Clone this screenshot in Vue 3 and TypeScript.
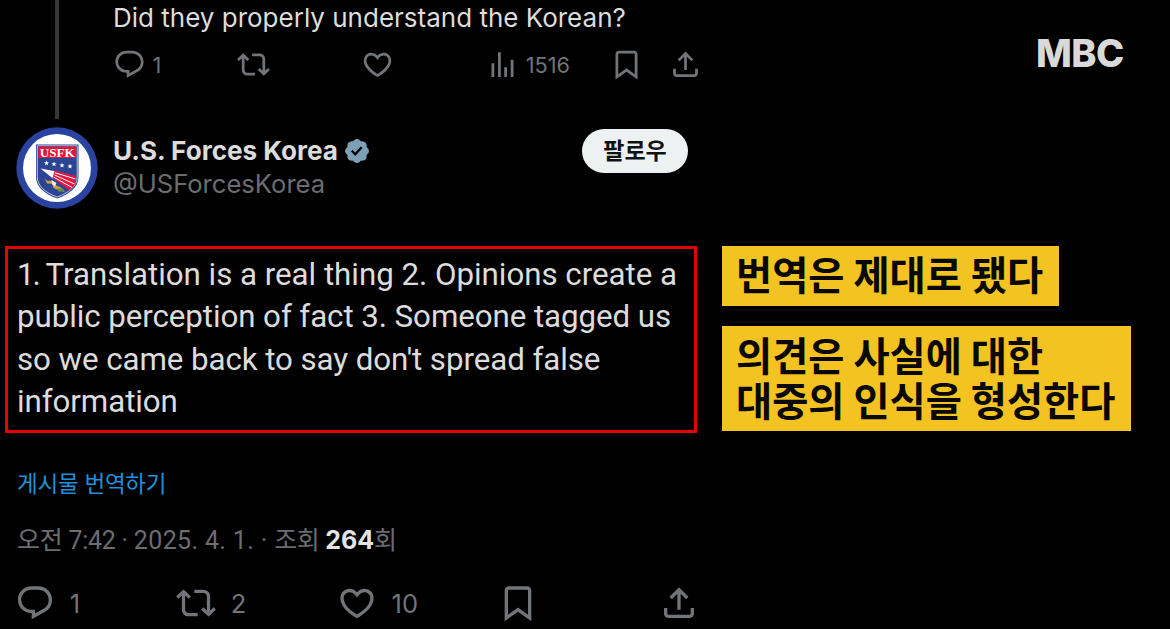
<script setup lang="ts">
interface Action {
  icon: keyof typeof icons
  label: string
  count?: string
}

const icons = {
  reply:
    'M1.751 10c0-4.42 3.584-8 8.005-8h4.366c4.49 0 8.129 3.64 8.129 8.13 0 2.96-1.607 5.68-4.196 7.11l-8.054 4.46v-3.69h-.067c-4.49.1-8.183-3.51-8.183-8.01zm8.005-6c-3.317 0-6.005 2.69-6.005 6 0 3.37 2.77 6.08 6.138 6.01l.351-.01h1.761v2.3l5.087-2.81c1.951-1.08 3.163-3.13 3.163-5.36 0-3.39-2.744-6.13-6.129-6.13H9.756z',
  repost:
    'M4.5 3.88l4.432 4.14-1.364 1.46L5.5 7.55V16c0 1.1.896 2 2 2H13v2H7.5c-2.209 0-4-1.79-4-4V7.55L1.432 9.48.068 8.02 4.5 3.88zM16.5 6H11V4h5.5c2.209 0 4 1.79 4 4v8.45l2.068-1.93 1.364 1.46-4.432 4.14-4.432-4.14 1.364-1.46 2.068 1.93V8c0-1.1-.896-2-2-2z',
  like:
    'M16.697 5.5c-1.222-.06-2.679.51-3.89 2.16l-.805 1.09-.806-1.09C9.984 6.01 8.526 5.44 7.304 5.5c-1.243.07-2.349.78-2.91 1.91-.552 1.12-.633 2.78.479 4.82 1.074 1.97 3.257 4.27 7.129 6.61 3.87-2.34 6.052-4.64 7.126-6.61 1.111-2.04 1.03-3.7.477-4.82-.561-1.13-1.666-1.84-2.908-1.91zm4.187 7.69c-1.351 2.48-4.001 5.12-8.379 7.67l-.503.3-.504-.3c-4.379-2.55-7.029-5.19-8.382-7.67-1.36-2.5-1.41-4.86-.514-6.67.887-1.79 2.647-2.91 4.601-3.01 1.651-.09 3.368.56 4.798 2.01 1.429-1.45 3.146-2.1 4.796-2.01 1.954.1 3.714 1.22 4.601 3.01.896 1.81.846 4.17-.514 6.67z',
  views:
    'M8.75 21V3h2v18h-2zM18 21V8.5h2V21h-2zM4 21l.004-10h2L6 21H4zm9.248 0v-7h2v7h-2z',
  bookmark:
    'M4 4.5C4 3.12 5.119 2 6.5 2h11C18.881 2 20 3.12 20 4.5v18.44l-8-5.71-8 5.71V4.5zM6.5 4c-.276 0-.5.22-.5.5v14.56l6-4.29 6 4.29V4.5c0-.28-.224-.5-.5-.5h-11z',
  share:
    'M12 2.59l5.7 5.7-1.41 1.42L13 6.41V16h-2V6.41l-3.3 3.3-1.41-1.42L12 2.59zM21 15l-.02 3.51c0 1.38-1.12 2.49-2.5 2.49H5.5C4.11 21 3 19.88 3 18.5V15h2v3.5c0 .28.22.5.5.5h12.98c.28 0 .5-.22.5-.5L19 15h2z',
}

const parentActions: Action[] = [
  { icon: 'reply', label: 'Reply', count: '1' },
  { icon: 'repost', label: 'Repost' },
  { icon: 'like', label: 'Like' },
  { icon: 'views', label: 'Views', count: '1516' },
  { icon: 'bookmark', label: 'Bookmark' },
  { icon: 'share', label: 'Share' },
]

const postActions: Action[] = [
  { icon: 'reply', label: 'Reply', count: '1' },
  { icon: 'repost', label: 'Repost', count: '2' },
  { icon: 'like', label: 'Like', count: '10' },
  { icon: 'bookmark', label: 'Bookmark' },
  { icon: 'share', label: 'Share' },
]
</script>

<template>
  <main class="frame">
    <section class="thread">
      <article class="parent">
        <div class="rail"><span class="rail-line"></span></div>
        <div class="parent-body">
          <p class="parent-text">Did they properly understand the Korean?</p>
          <div class="actions small">
            <div v-for="a in parentActions" :key="a.icon" class="action">
              <svg viewBox="0 0 24 24" :aria-label="a.label"><path :d="icons[a.icon]" /></svg>
              <span v-if="a.count" class="count">{{ a.count }}</span>
            </div>
          </div>
        </div>
      </article>

      <header class="author">
        <svg class="avatar" viewBox="0 0 82 82" aria-label="USFK">
          <circle cx="41" cy="41" r="40.7" fill="#2a43a0" />
          <circle cx="41" cy="41" r="34" fill="#fff" />
          <path d="M20 17.5H62.500V50C62.500 60 54 67 41.200 71.500C28.500 67 20 60 20 50Z" fill="#2b4594" />
          <path d="M21.300 18.800H61.200V50C61.200 59 53 65.800 41.200 70C29.500 65.800 21.300 59 21.300 50Z" fill="#2b4594" stroke="#cfd6e8" stroke-width="0.9" />
          <rect x="22.200" y="19.500" width="38" height="11.500" fill="#dc1738" />
          <text x="41.200" y="29.500" text-anchor="middle" textLength="35" lengthAdjust="spacingAndGlyphs" class="crest">USFK</text>
          <g fill="#fff">
            <path
              v-for="(s, i) in [[30.500, 36], [38, 37], [46, 38.300], [54, 39.200]]"
              :key="i"
              :transform="`translate(${s[0]} ${s[1]})`"
              d="M0-2.500L.700-.800 2.500-.700 1.100.500 1.600 2.200 0 1.200-1.600 2.200-1.100.500-2.500-.700-.700-.800Z"
            />
          </g>
          <path d="M24.500 41.500L39 44.200 37 51.500Z" fill="#fff" />
          <path d="M38.500 43.500L59.500 49V57.500L53.500 63.500 36.500 51Z" fill="#e3173e" />
          <path d="M39 45.800L59.500 52M38.500 48L58.500 57M37.500 50L56 60.500" stroke="#fff" stroke-width="1" fill="none" />
          <path d="M28.500 51.500Q31 55 35 53.500L38 57.500 45 60.500 49 65 43 63.500 37.500 61 36 56.800 31 56.500Z" fill="#c9a13c" />
          <path d="M35.500 53L40.500 56 39 59.500 36 57Z" fill="#f3f1e6" />
          <path d="M41 62L47 61.500 48.500 63.500 43 65Z" fill="#5c8a4b" />
        </svg>
        <div class="identity">
          <div class="name-row">
            <strong class="name">U.S. Forces Korea</strong>
            <svg class="verified" viewBox="0 0 22 22" aria-label="Verified">
              <path
                d="M20.396 11c-.018-.646-.215-1.275-.57-1.816-.354-.54-.852-.972-1.438-1.246.223-.607.27-1.264.14-1.897-.131-.634-.437-1.218-.882-1.687-.47-.445-1.053-.75-1.687-.882-.633-.13-1.29-.083-1.897.14-.273-.587-.704-1.086-1.245-1.44S11.647 1.62 11 1.604c-.646.017-1.273.213-1.813.568s-.969.854-1.24 1.44c-.608-.223-1.267-.272-1.902-.14-.635.13-1.22.436-1.69.882-.445.47-.749 1.055-.878 1.688-.13.633-.08 1.29.144 1.896-.587.274-1.087.705-1.443 1.245-.356.54-.555 1.17-.574 1.817.02.647.218 1.276.574 1.817.356.54.856.972 1.443 1.245-.224.606-.274 1.263-.144 1.896.13.634.433 1.218.877 1.688.47.443 1.054.747 1.687.878.633.132 1.29.084 1.897-.136.274.586.705 1.084 1.246 1.439.54.354 1.17.551 1.816.569.647-.016 1.276-.213 1.817-.567s.972-.854 1.245-1.44c.604.239 1.266.296 1.903.164.636-.132 1.22-.447 1.68-.907.46-.46.776-1.044.908-1.681s.075-1.299-.165-1.903c.586-.274 1.084-.705 1.439-1.246.354-.54.551-1.17.569-1.816zM9.662 14.85l-3.429-3.428 1.293-1.302 2.072 2.072 4.400-4.794 1.347 1.246z"
              />
            </svg>
          </div>
          <span class="handle">@USForcesKorea</span>
        </div>
        <button class="follow" type="button">팔로우</button>
      </header>

      <div class="post">
        <p class="line first-line"><span class="ordinal">1.</span> Translation is a real thing 2. Opinions create a</p>
        <p class="line">public perception of fact 3. Someone tagged us</p>
        <p class="line">so we came back to say don't spread false</p>
        <p class="line">information</p>
      </div>

      <a class="translate">게시물 번역하기</a>
      <p class="meta">
        <span class="time">오전 7:42 · </span><span class="date">2025. 4. 1. · </span><span class="views">조회 <b>264</b>회</span>
      </p>

      <div class="actions large">
        <div v-for="a in postActions" :key="a.icon" class="action">
          <svg viewBox="0 0 24 24" :aria-label="a.label"><path :d="icons[a.icon]" /></svg>
          <span v-if="a.count" class="count">{{ a.count }}</span>
        </div>
      </div>
    </section>

    <aside class="captions">
      <div class="logo">MBC</div>
      <p class="caption first">번역은 제대로 됐다</p>
      <p class="caption second">의견은 사실에 대한<br />대중의 인식을 형성한다</p>
    </aside>
  </main>
</template>

<style>
body {
  background: #000;
}
</style>

<style scoped>
.frame {
  width: 1170px;
  height: 629px;
  overflow: hidden;
  display: flex;
  background: #000;
  color: #dcdcdc;
  font-family: Inter, 'Noto Sans CJK KR', sans-serif;
}
p {
  margin: 0;
  white-space: nowrap;
}
.thread {
  width: 698px;
  height: 629px;
  flex: none;
  display: flex;
  flex-direction: column;
}
.parent {
  display: flex;
  height: 119px;
  padding-left: 17px;
}
.rail {
  width: 80px;
  flex: none;
  display: flex;
  justify-content: center;
}
.rail-line {
  width: 4px;
  background: #373737;
}
.parent-body {
  margin-left: 16px;
}
.parent-text {
  height: 34px;
  line-height: 35px;
  font-size: 26px;
}
.actions {
  display: grid;
  color: #717479;
}
.action {
  display: flex;
  align-items: center;
}
.action svg {
  fill: currentColor;
  flex: none;
}
.small {
  grid-template-columns: 124.4px 124.4px 124.4px 124.4px 58.500px 34px;
  margin: 14px 0 0 -0.500px;
}
.small svg {
  width: 33px;
  height: 33px;
}
.small .count {
  margin-left: 7px;
  font-size: 21.7px;
}
.author {
  display: flex;
  height: 82px;
  margin-top: 8px;
  padding-left: 16.400px;
}
.avatar {
  width: 82px;
  height: 82px;
  flex: none;
}
.crest {
  font: bold 11.500px 'Liberation Serif', serif;
  fill: #fff;
}
.identity {
  width: 468px;
  margin-left: 14.600px;
  padding-top: 7px;
}
.name-row {
  display: flex;
  align-items: center;
  height: 34px;
}
.name {
  font-size: 26.1px;
  font-weight: 700;
  line-height: 34px;
}
.verified {
  width: 28px;
  height: 28px;
  margin-left: 5px;
  fill: #7e9fb8;
}
.handle {
  display: block;
  line-height: 32px;
  font-size: 25.6px;
  color: #6b6d71;
}
.follow {
  width: 106px;
  height: 44px;
  margin-top: 2px;
  margin-left: 1px;
  padding: 0 0 3px;
  border: 0;
  border-radius: 22px;
  background: #eef1f2;
  color: #0f1214;
  font: 700 23px/41px 'Noto Sans CJK KR', sans-serif;
}
.post {
  box-sizing: border-box;
  width: 692px;
  height: 187px;
  margin: 37px 0 0 5px;
  padding: 4.500px 0 0 9px;
  border: 3px solid #e60303;
}
.line {
  height: 42.6px;
  line-height: 42.6px;
  font-family: Roboto, sans-serif;
  font-size: 31.3px;
  letter-spacing: -0.08px;
}
.first-line {
  letter-spacing: -0.03px;
}
.ordinal {
  letter-spacing: -2.2px;
}
.translate {
  height: 34px;
  margin: 34px 0 0 17px;
  line-height: 34px;
  font-size: 22.500px;
  letter-spacing: -0.25px;
  color: #1c92df;
}
.meta {
  height: 36px;
  margin: 21px 0 0 17px;
  line-height: 36px;
  font-family: Roboto, 'Noto Sans CJK KR', sans-serif;
  font-size: 25px;
  color: #6b6d71;
}
.time {
  letter-spacing: -0.25px;
}
.date {
  letter-spacing: 0.35px;
}
.views {
  letter-spacing: -0.4px;
}
.meta b {
  font-family: Inter, sans-serif;
  font-weight: 700;
  letter-spacing: 0;
  color: #e4e4e4;
}
.large {
  grid-template-columns: repeat(4, 160.900px) 40px;
  margin: 25px 0 0 15.300px;
}
.large svg {
  width: 40px;
  height: 40px;
}
.large .count {
  margin-left: 14.500px;
  padding-top: 1px;
  font-size: 25.500px;
}
.captions {
  display: flex;
  flex-direction: column;
  align-items: flex-start;
  padding-left: 24px;
}
.logo {
  height: 50px;
  margin: 28px 0 168px 314px;
  line-height: 50px;
  font-size: 38px;
  font-weight: 800;
  letter-spacing: -0.6px;
  color: #d9d9d9;
}
.caption {
  box-sizing: border-box;
  padding-left: 14px;
  background: #f2c321;
  color: #0a0802;
  font: 700 39.300px/45px 'Noto Sans CJK KR', sans-serif;
}
.first {
  width: 337.400px;
  height: 60px;
  padding-top: 4px;
}
.second {
  width: 409px;
  height: 105px;
  margin-top: 20px;
  padding-top: 4.500px;
}
</style>
